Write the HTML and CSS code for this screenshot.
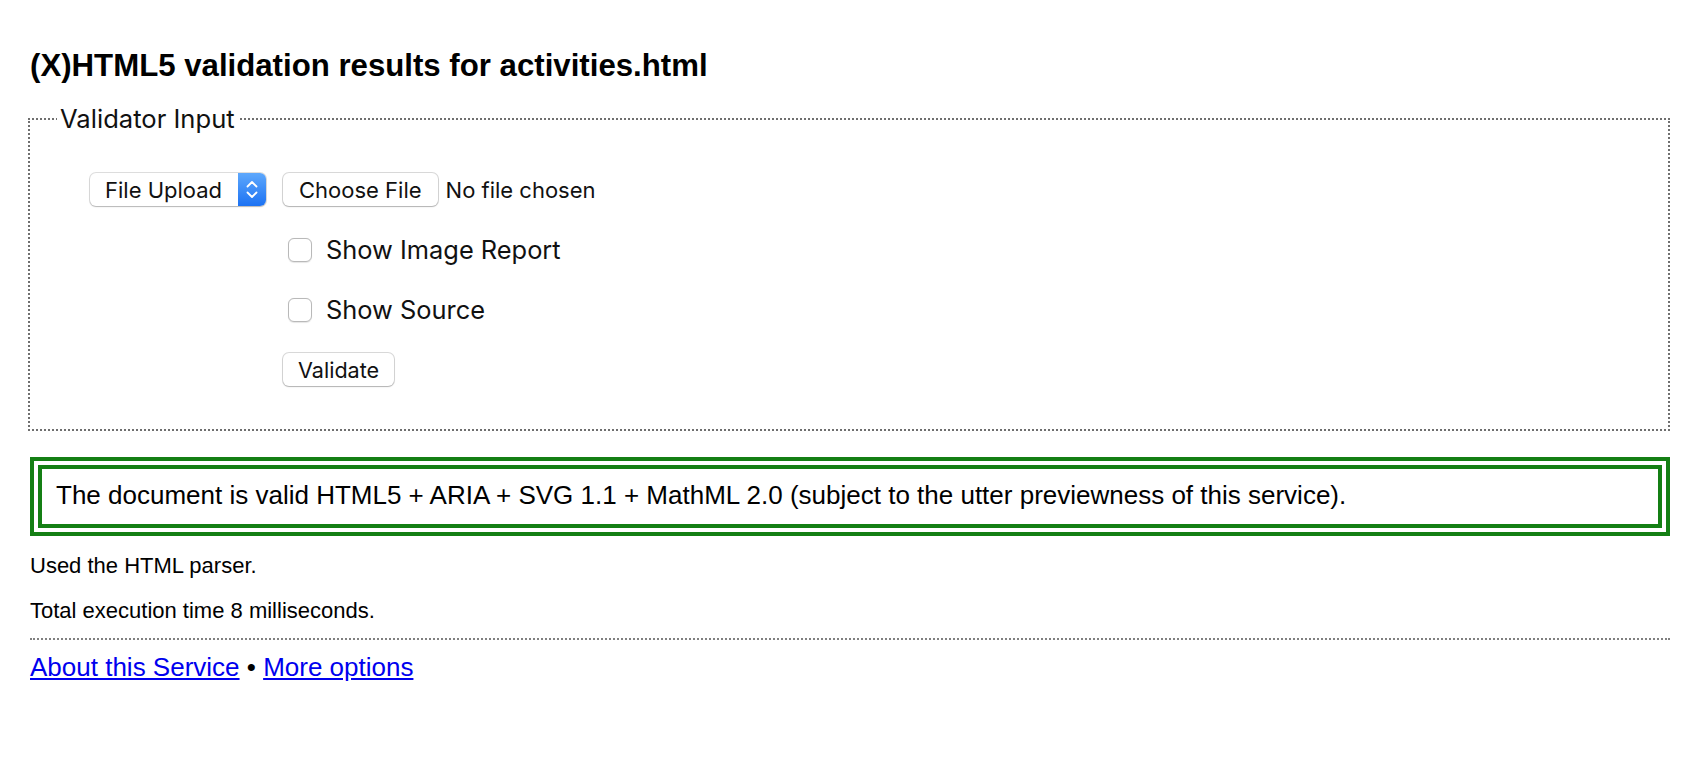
FILE: index.html
```html
<!DOCTYPE html>
<html lang="en">
<head>
<meta charset="utf-8">
<title>Validation results for activities.html</title>
<link rel="stylesheet" href="styles.css">
</head>
<body>
<h1 class="title">(X)HTML5 validation results for activities.html</h1>
<fieldset class="input-box">
  <legend class="input-legend">Validator Input</legend>
  <div class="form-grid">
    <div class="select">
      <span class="select-label">File Upload</span>
      <span class="select-arrows">
        <svg width="28" height="33" viewBox="0 0 28 33" aria-hidden="true">
          <path d="M9.5 13.5 L14 9 L18.5 13.5" fill="none" stroke="#fff" stroke-width="1.8" stroke-linecap="round" stroke-linejoin="round"/>
          <path d="M9.5 19.5 L14 24 L18.5 19.5" fill="none" stroke="#fff" stroke-width="1.8" stroke-linecap="round" stroke-linejoin="round"/>
        </svg>
      </span>
    </div>
    <div class="file-row">
      <button type="button" class="btn">Choose File</button>
      <span class="file-status">No file chosen</span>
    </div>
    <label class="check-row"><input type="checkbox" class="checkbox">Show Image Report</label>
    <label class="check-row"><input type="checkbox" class="checkbox">Show Source</label>
    <div class="submit-row"><button type="button" class="btn btn-submit">Validate</button></div>
  </div>
</fieldset>
<p class="success">The document is valid HTML5 + ARIA + SVG 1.1 + MathML 2.0 (subject to the utter previewness of this service).</p>
<p class="note">Used the HTML parser.</p>
<p class="note">Total execution time 8 milliseconds.</p>
<p class="footer"><a href="#about" class="link">About this Service</a> • <a href="#options" class="link">More options</a></p>
</body>
</html>
```

FILE: styles.css
```css
html, body {
  background: #fff;
}
body {
  margin: 0;
  padding: 0 22px 0 29px;
  font-family: "Liberation Sans", Arial, sans-serif;
  color: #000;
}
.title {
  margin: 48px 0 20px 1px;
  font-size: 31.2px;
  font-weight: bold;
  line-height: normal;
}
.input-box {
  margin: 0 0 0 -1px;
  padding: 39px 20px 43px 60px;
  border: 2px dotted #6f6f6f;
  min-width: 0;
}
.input-legend {
  margin-left: -33px;
  padding: 0 3px;
  font-family: Inter, "Noto Sans", sans-serif;
  font-size: 25.6px;
  line-height: 30px;
  color: #111;
}
.form-grid {
  display: grid;
  grid-template-columns: 176px auto;
  grid-template-rows: 33px 33px 33px 33px;
  column-gap: 17px;
  row-gap: 27px;
  font-family: Inter, "Noto Sans", sans-serif;
  color: #111;
}
.select {
  display: flex;
  align-items: stretch;
  height: 33px;
  box-sizing: border-box;
  border-radius: 6px;
  background: #fff;
  box-shadow: 0 0 0 1px rgba(0,0,0,0.13), 0 1px 1.5px rgba(0,0,0,0.18);
  overflow: hidden;
}
.select-label {
  flex: 1;
  display: flex;
  align-items: center;
  padding-left: 15px;
  font-size: 22px;
}
.select-arrows {
  width: 28px;
  display: flex;
  background: linear-gradient(#5ea8fc, #1c72f3);
}
.file-row {
  display: flex;
  align-items: center;
  gap: 8px;
}
.btn {
  height: 33px;
  box-sizing: border-box;
  padding: 0 16px;
  border: 0;
  border-radius: 6px;
  background: #fff;
  box-shadow: 0 0 0 1px rgba(0,0,0,0.15), 0 1px 1.5px rgba(0,0,0,0.18);
  font-family: Inter, "Noto Sans", sans-serif;
  font-size: 22px;
  color: #111;
}
.btn-submit {
  padding: 0 15px;
  font-size: 21.6px;
}
.file-status {
  font-size: 22px;
}
.check-row {
  grid-column: 2;
  display: flex;
  align-items: center;
  gap: 14px;
  padding-left: 5px;
  font-size: 25.4px;
}
.checkbox {
  appearance: none;
  -webkit-appearance: none;
  margin: 0;
  width: 24px;
  height: 24px;
  box-sizing: border-box;
  border: 1px solid #b9b9b9;
  border-radius: 6px;
  background: #fff;
  box-shadow: 0 0.5px 1px rgba(0,0,0,0.1);
}
.submit-row {
  grid-column: 2;
  display: flex;
}
.success {
  margin: 26px 0 0 1px;
  padding: 11px 14px 13px;
  border: 12px double #147f14;
  font-size: 26px;
  line-height: normal;
}
.note {
  margin: 17px 0 0 1px;
  font-size: 22px;
  line-height: normal;
}
.note + .note {
  margin-top: 19px;
}
.footer {
  margin: 14px 0 0 1px;
  padding-top: 12px;
  border-top: 2px dotted #808080;
  font-size: 26px;
  line-height: normal;
}
.link {
  color: #0000ee;
  text-decoration: underline;
}
```
